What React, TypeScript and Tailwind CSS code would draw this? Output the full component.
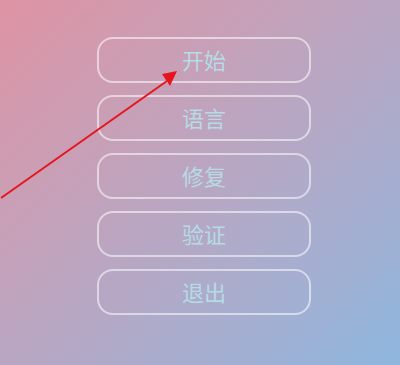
const items = ["开始", "语言", "修复", "验证", "退出"]

const App = () => {
  return (
    <main
      className="relative h-[365px] w-[400px] overflow-hidden bg-gradient-to-br from-[#de93a3] via-[#b9a6c2] to-[#8db6de]"
      style={{ fontFamily: '"Noto Sans CJK SC", "Noto Sans", sans-serif' }}
    >
      <div className="flex flex-col gap-[12px] pl-[97px] pt-[37px]">
        {items.map((label) => (
          <button
            key={label}
            className="flex h-[46px] w-[214px] items-center justify-center rounded-[16px] border-2 border-white/55 pb-[2px] text-[22px] leading-none text-[#b6dbe4]"
          >
            {label}
          </button>
        ))}
      </div>
      <svg
        className="pointer-events-none absolute left-0 top-0"
        width="400"
        height="365"
        viewBox="0 0 400 365"
      >
        <line x1="1" y1="198" x2="167" y2="81" stroke="#e8141c" strokeWidth="2" />
        <polygon points="177,71 162,74 170,86" fill="#e8141c" />
      </svg>
    </main>
  )
}

export default App
